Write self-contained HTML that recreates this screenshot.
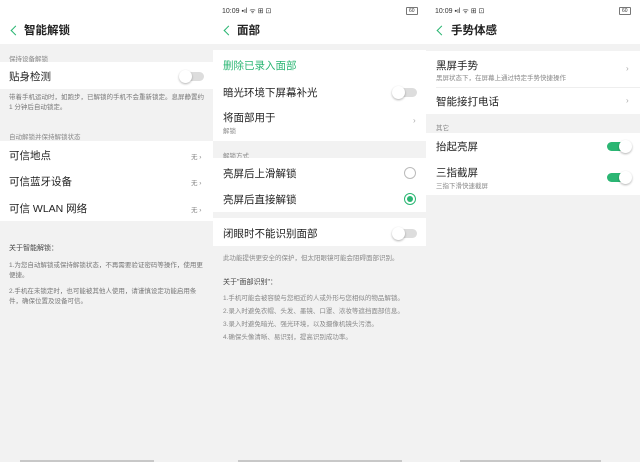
<!DOCTYPE html>
<html><head><meta charset="utf-8"><style>
*{margin:0;padding:0;box-sizing:border-box}
body{width:640px;height:462px;background:#f2f2f2;position:relative;overflow:hidden;font-family:"Liberation Sans","Noto Sans CJK SC",sans-serif;color:#222}
.a{position:absolute;white-space:nowrap}
.w{position:absolute;background:#fff}
.t{font-size:10.5px;color:#222}
.h{font-size:11.5px;font-weight:bold;color:#222}
.s{font-size:6.5px;color:#888}
.d{font-size:6.5px;color:#777;line-height:10px;white-space:normal}
.bk{position:absolute;width:7px;height:7px;border-left:1.8px solid #2bb673;border-bottom:1.8px solid #2bb673;transform:rotate(45deg)}
.ch{font-size:8px;color:#aaa}
.tg{position:absolute;width:24px;height:9px;border-radius:5px;background:#ddd}
.tg i{position:absolute;top:-2px;left:-1px;width:13px;height:13px;border-radius:50%;background:#fff;box-shadow:0 1px 2px rgba(0,0,0,.3)}
.tg.on{background:#2bb673}.tg.on i{left:12px}
.sb{font-size:7px;color:#333}
.nav{position:absolute;top:460px;height:2px;background:#c8c8c8}
</style></head><body>
<!-- Panel 1 -->
<div class="w" style="left:0;top:0;width:213px;height:44px"></div>
<div class="bk" style="left:12px;top:27px"></div>
<div class="a h" style="left:24px;top:22px">智能解锁</div>
<div class="a s" style="left:9px;top:53px">保持设备解锁</div>
<div class="w" style="left:0;top:62px;width:213px;height:27px"></div>
<div class="a t" style="left:9px;top:69px">贴身检测</div>
<div class="tg" style="left:180px;top:72px"><i></i></div>
<div class="a d" style="left:9px;top:93px;width:200px">带着手机运动时，如跑步，已解锁的手机不会重新锁定。息屏静置约 1 分钟后自动锁定。</div>
<div class="a s" style="left:9px;top:131px">自动解锁并保持解锁状态</div>
<div class="w" style="left:0;top:141px;width:213px;height:80px"></div>
<div class="a t" style="left:9px;top:148px">可信地点</div>
<div class="a t" style="left:9px;top:174px">可信蓝牙设备</div>
<div class="a t" style="left:9px;top:201px">可信 WLAN 网络</div>
<div class="a s" style="left:191px;top:151px">无 ›</div>
<div class="a s" style="left:191px;top:177px">无 ›</div>
<div class="a s" style="left:191px;top:204px">无 ›</div>
<div class="a" style="left:9px;top:243px;font-size:7px;color:#444">关于智能解锁：</div>
<div class="a d" style="left:9px;top:261px;width:200px">1.为您自动解锁或保持解锁状态，不再需要验证密码等操作，使用更便捷。</div>
<div class="a d" style="left:9px;top:287px;width:200px">2.手机在未锁定时，也可能被其他人使用，请谨慎设定功能启用条件，确保位置及设备可信。</div>
<div class="nav" style="left:20px;width:134px"></div>
<!-- Panel 2 -->
<div class="w" style="left:213px;top:0;width:213px;height:44px"></div>
<div class="a sb" style="left:222px;top:7px">10:09 ▪︎ıl ᯤ ⊞ ⊡</div>
<div class="a sb" style="left:406px;top:7px;border:1px solid #777;border-radius:1px;font-size:5px;padding:0 2px">60</div>
<div class="bk" style="left:225px;top:27px"></div>
<div class="a h" style="left:237px;top:22px">面部</div>
<div class="w" style="left:213px;top:50px;width:213px;height:91px"></div>
<div class="a t" style="left:223px;top:58px;color:#2bb673">删除已录入面部</div>
<div class="a t" style="left:223px;top:85px">暗光环境下屏幕补光</div>
<div class="tg" style="left:393px;top:88px"><i></i></div>
<div class="a t" style="left:223px;top:110px">将面部用于</div>
<div class="a s" style="left:223px;top:125px">解锁</div>
<div class="a ch" style="left:413px;top:116px">›</div>
<div class="a s" style="left:223px;top:150px">解锁方式</div>
<div class="w" style="left:213px;top:158px;width:213px;height:54px"></div>
<div class="a t" style="left:223px;top:166px">亮屏后上滑解锁</div>
<div class="a t" style="left:223px;top:192px">亮屏后直接解锁</div>
<div class="a" style="left:404px;top:167px;width:12px;height:12px;border:1px solid #bbb;border-radius:50%"></div>
<div class="a" style="left:404px;top:193px;width:12px;height:12px;border:1.5px solid #2bb673;border-radius:50%"><div style="margin:2px;width:6px;height:6px;border-radius:50%;background:#2bb673"></div></div>
<div class="w" style="left:213px;top:218px;width:213px;height:28px"></div>
<div class="a t" style="left:223px;top:226px">闭眼时不能识别面部</div>
<div class="tg" style="left:393px;top:229px"><i></i></div>
<div class="a s" style="left:223px;top:252px">此功能提供更安全的保护，但太阳眼镜可能会阻碍面部识别。</div>
<div class="a" style="left:223px;top:277px;font-size:7px;color:#444">关于"面部识别"：</div>
<div class="a s" style="left:223px;top:292px">1.手机可能会被容貌与您相近的人或外形与您相似的物品解锁。</div>
<div class="a s" style="left:223px;top:305px">2.录入时避免衣帽、头发、墨镜、口罩、浓妆等遮挡面部信息。</div>
<div class="a s" style="left:223px;top:318px">3.录入时避免暗光、强光环境，以及摄像机镜头污渍。</div>
<div class="a s" style="left:223px;top:331px">4.确保头像清晰、易识别，提高识别成功率。</div>
<div class="nav" style="left:238px;width:164px"></div>
<!-- Panel 3 -->
<div class="w" style="left:426px;top:0;width:214px;height:44px"></div>
<div class="a sb" style="left:435px;top:7px">10:09 ▪︎ıl ᯤ ⊞ ⊡</div>
<div class="a sb" style="left:619px;top:7px;border:1px solid #777;border-radius:1px;font-size:5px;padding:0 2px">60</div>
<div class="bk" style="left:438px;top:27px"></div>
<div class="a h" style="left:451px;top:22px">手势体感</div>
<div class="w" style="left:426px;top:51px;width:214px;height:63px"></div>
<div class="a t" style="left:436px;top:58px">黑屏手势</div>
<div class="a s" style="left:436px;top:72px">黑屏状态下，在屏幕上通过特定手势快捷操作</div>
<div class="a ch" style="left:626px;top:64px">›</div>
<div class="a" style="left:436px;top:87px;width:204px;height:1px;background:#eee"></div>
<div class="a t" style="left:436px;top:94px">智能接打电话</div>
<div class="a ch" style="left:626px;top:96px">›</div>
<div class="a s" style="left:436px;top:122px">其它</div>
<div class="w" style="left:426px;top:133px;width:214px;height:62px"></div>
<div class="a t" style="left:436px;top:139px">抬起亮屏</div>
<div class="tg on" style="left:607px;top:142px"><i></i></div>
<div class="a t" style="left:436px;top:165px">三指截屏</div>
<div class="a s" style="left:436px;top:180px">三指下滑快速截屏</div>
<div class="tg on" style="left:607px;top:173px"><i></i></div>
<div class="nav" style="left:460px;width:141px"></div>
</body></html>
